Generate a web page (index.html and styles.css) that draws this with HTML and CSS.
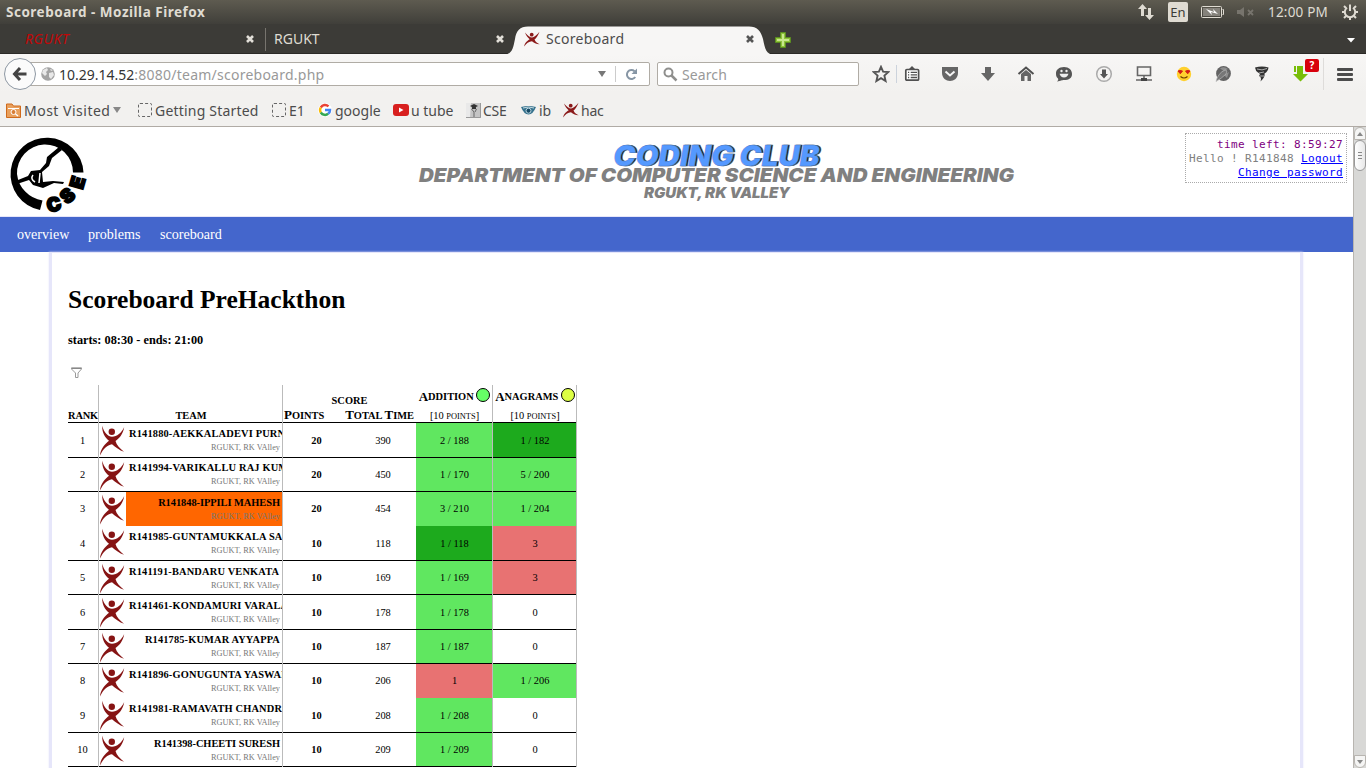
FILE: index.html
```html
<!DOCTYPE html>
<html lang="en">
<head>
<meta charset="utf-8">
<title>Scoreboard</title>
<link rel="stylesheet" href="styles.css">
</head>
<body>
<svg width="0" height="0" class="defs">
  <defs>
    <symbol id="man" viewBox="0 0 26 31">
      <circle cx="12.800" cy="6.700" r="3.200"/>
      <path d="M3.200 .8C5 8 9 11.500 13 11.800C18 11.500 22.500 8 25.200 2C24 9.500 20 13.500 16.500 16C17.500 20 21 23.500 25 26.800C20.500 25.500 16.500 22 13 19.300C8 20 4 24 1 30.500C1.500 24 6 19 10 15.800C6 12.500 3 8 3.200 .8Z"/>
    </symbol>
    <symbol id="fav" viewBox="0 0 16 16">
      <circle cx="7.700" cy="3.700" r="1.900"/>
      <path d="M1 1.500C4 5 6 6.300 8 6.500C10 6.300 13 4 15.500 .8C14 5 12 7.500 10.500 8.500C11.500 11 13.500 12.300 15.800 13.300C12 13.300 9.500 11.500 8 10.300C5 10.500 2 12.500 .2 15.500C.5 12 3.500 9.500 5.700 8.200C3.500 6.500 2 4.500 1 1.500Z"/>
    </symbol>
    <symbol id="close" viewBox="0 0 10 10"><path d="M2 2L8 8M8 2L2 8" stroke-width="2.600"/></symbol>
  </defs>
</svg>
<div class="screen">
  <header class="titlebar">
    <span class="window-title">Scoreboard - Mozilla Firefox</span>
    <div class="indicators">
      <svg width="18" height="18" viewBox="0 0 18 18" fill="#dfdbd2"><path d="M5.500 1L10 6H7V13H4V6H1ZM12.500 17L8 12H11V5H14V12H17Z"/></svg>
      <span class="lang">En</span>
      <svg class="battery" width="25" height="14" viewBox="0 0 25 14"><rect x="1.500" y="1.500" width="20" height="11" rx="1" fill="none" stroke="#dfdbd2"/><rect x="3" y="3" width="17" height="8" fill="#85827b"/><path d="M22.500 4.500h1v5h-1" fill="none" stroke="#dfdbd2"/><path d="M6 4L14 7L13 4L18 9L11 7L12 10Z" fill="#fff"/></svg>
      <svg class="volume" width="19" height="12" viewBox="0 0 19 12"><path d="M1 4H4L8 1V11L4 8H1Z" fill="#77746d"/><path d="M12 4L17 9M17 4L12 9" stroke="#77746d" stroke-width="1.800"/></svg>
      <span class="clock">12:00 PM</span>
      <svg class="gear" width="18" height="18" viewBox="0 0 18 18" fill="none" stroke="#dfdbd2"><path d="M6 4.800A5.200 5.200 0 1 0 12 4.800" stroke-width="2"/><path d="M9 1.500V8" stroke-width="2"/><path d="M3 3L5 5M15 3L13 5M1 9H3.500M14.500 9H17M3 15L5 13M15 15L13 13M9 14.500V17" stroke-width="2"/></svg>
    </div>
  </header>
  <nav class="tabs">
    <div class="tab tab-one"><span class="tab-red">RGUKT</span><svg class="x" width="10" height="10"><use href="#close"/></svg></div>
    <div class="tab tab-two"><span>RGUKT</span><svg class="x" width="10" height="10"><use href="#close"/></svg></div>
    <div class="tab tab-active">
      <svg class="tab-shape" width="270" height="29" viewBox="0 0 270 29"><path d="M0 29C8 28 9 23 11 13C12 5 16 .5 24 .5H245C253 .5 257 5 259 13C261 23 262 28 270 29Z" fill="#f7f6f5"/></svg>
      <svg class="fav" width="16" height="16"><use href="#fav"/></svg><span class="tab-name">Scoreboard</span><svg class="x" width="10" height="10"><use href="#close"/></svg>
    </div>
    <svg class="plus" width="16" height="16" viewBox="0 0 16 16"><path d="M5.500 .5h5v5h5v5h-5v5h-5v-5h-5v-5h5Z" fill="#8fc33a" stroke="#5b8d20"/><path d="M8 2V14M2 8H14" stroke="#c9e88d" stroke-width="2"/></svg>
    <svg class="tabs-more" width="8" height="5" viewBox="0 0 8 5"><path d="M0 0H8L4 4.500Z" fill="#fff"/></svg>
  </nav>
  <div class="toolbar">
    <div class="back"><svg width="16" height="16" viewBox="0 0 16 16"><path d="M8 2L2.500 8L8 14M3 8H14.500" fill="none" stroke="#444" stroke-width="3"/></svg></div>
    <div class="urlbar">
      <svg width="14" height="14" viewBox="0 0 14 14"><circle cx="7" cy="7" r="6.800" fill="#a3a3a3"/><path d="M2 3L6 1L7 3L5 5L6 7L4 9L1 6ZM8 6L12 5L13 8L10 12L8 10ZM9 2L12 3L10 4Z" fill="#e8e8e8"/></svg>
      <span class="url"><b>10.29.14.52</b>:8080/team/scoreboard.php</span>
      <svg class="drop" width="8" height="6" viewBox="0 0 8 6"><path d="M0 0H8L4 6Z" fill="#777"/></svg>
      <i class="url-sep"></i>
      <svg width="13" height="13" viewBox="0 0 13 13"><path d="M10.200 9A4.500 4.500 0 1 1 9.500 3.200" fill="none" stroke="#8796a5" stroke-width="2"/><path d="M12 .5V6H6.500Z" fill="#8796a5"/></svg>
    </div>
    <div class="search"><svg width="15" height="15" viewBox="0 0 15 15" fill="none" stroke="#8f8f8d"><circle cx="5.500" cy="5.500" r="4" stroke-width="2"/><path d="M8.500 8.500L13.500 13.500" stroke-width="2.500"/></svg><span>Search</span></div>
    <div class="tools">
      <svg viewBox="0 0 18 18"><path d="M9 1.800L11.100 6.600L16.300 7.100L12.400 10.600L13.600 16L9 13.200L4.400 16L5.600 10.600L1.700 7.100L6.900 6.600Z" fill="none" stroke="#555" stroke-width="1.900"/></svg>
      <i class="tool-sep"></i>
      <svg class="t-list" viewBox="0 0 18 18"><rect x="2.800" y="4.500" width="12.800" height="10.700" rx="1" fill="#fff" stroke="#505050" stroke-width="1.700"/><path d="M5.500 4.500L9 1L12.500 4.500Z" fill="#505050"/><path d="M5 7.300H6.200M5 9.900H6.200M5 12.500H6.200M7.700 7.300H14M7.700 9.900H14M7.700 12.500H14" stroke="#505050" stroke-width="1.300"/></svg>
      <svg class="m20" viewBox="0 0 18 18"><path d="M1 2H17V8C17 13 13 16 9 16S1 13 1 8Z" fill="#666"/><path d="M4.500 6.500L9 10.500L13.500 6.500" fill="none" stroke="#f5f5f5" stroke-width="2"/></svg>
      <svg class="m20" viewBox="0 0 18 18"><path d="M6 2H12V8H16L9 16L2 8H6Z" fill="#666"/></svg>
      <svg class="m20" viewBox="0 0 18 18"><path d="M1.500 9L9 2.500L16.500 9" fill="none" stroke="#505050" stroke-width="2"/><path d="M4 9L9 5L14 9V16H10.500V11H7.500V16H4Z" fill="#666"/></svg>
      <svg class="m20" viewBox="0 0 18 18"><path d="M9 2C14 2 17 5 17 9S14 15 9 15C7 15 6 16 2 16.500Q4 15 3 13.500C1 12 1 10 1 8C1 5 4 2 9 2Z" fill="#555"/><circle cx="6.500" cy="6" r="1.200" fill="#eee"/><circle cx="11.500" cy="6" r="1.200" fill="#eee"/><path d="M4.500 8.800H13.500Q12.500 12.500 9 12.500T4.500 8.800Z" fill="#eee"/></svg>
      <svg class="m22" viewBox="0 0 18 18"><circle cx="9" cy="9" r="7.300" fill="none" stroke="#aaa" stroke-width="1.500"/><path d="M7 4.500H11V9H13L9 13.500L5 9H7Z" fill="#555"/></svg>
      <svg class="m22" viewBox="0 0 18 18"><path d="M2.500 2H15.500V10.500H2.500ZM9 11V13M1 15H17" fill="none" stroke="#666" stroke-width="1.600"/><path d="M6 14.500H12" stroke="#444" stroke-width="3"/></svg>
      <svg class="m22" viewBox="0 0 18 18"><circle cx="9" cy="9" r="7.200" fill="#ffd02f"/><path d="M5 5.500L3 6L5.300 8.800L7.500 6ZM13 5.500L10.500 6L12.700 8.800L15 6Z" fill="#d31c17" stroke="#d31c17"/><path d="M5.500 11.500Q9 14.500 12.500 11.500" fill="none" stroke="#714000" stroke-width="1.200"/></svg>
      <svg class="m21" viewBox="0 0 18 18"><circle cx="9.500" cy="8.500" r="7.400" fill="#636363"/><path d="M6 3.500Q10 1 14 4L10 6ZM10 10L15 7L13 13Z" fill="#8e8e8e"/><path d="M2 16.500Q4 8 11 5Q14 5 12 9Q8 13 2 16.500Z" fill="#777" stroke="#bbb" stroke-width=".7"/></svg>
      <svg class="m21" viewBox="0 0 18 18"><path d="M2 2.500Q9 .5 15.500 2.500Q15 6.500 11.500 8.500Q12.500 12 7.500 16.500Q9 12 6 11Q8 9 5 7.500Q2.500 6 2 2.500Z" fill="#333"/><path d="M4 4Q9 6 14 3.500M6 8L11 7M7 11H11" stroke="#ccc" fill="none" stroke-width=".8"/></svg>
      <div class="dl"><svg viewBox="0 0 18 18"><path d="M3 1H5V7H3ZM6 1H12V9H17L9.500 16.500L2 9H6Z" fill="#78bd07"/></svg><span class="badge">?</span></div>
    </div>
    <i class="menu-sep"></i>
    <div class="burger"><i></i><i></i><i></i></div>
  </div>
  <div class="bookmarks">
    <svg width="15" height="15" viewBox="0 0 15 15"><path d="M.5 14.500V1H6L7.500 3H14.500V14.500Z" fill="#e9a05c" stroke="#cf6a1c"/><path d="M2 5.500H13" stroke="#fff"/><circle cx="7.500" cy="9" r="2.500" fill="#d87e36" stroke="#fff"/><path d="M9.500 11L12 13" stroke="#fff" stroke-width="1.500"/></svg><span class="bm b1">Most Visited</span>
    <svg class="bdrop" width="8" height="6" viewBox="0 0 8 6"><path d="M0 0H8L4 6Z" fill="#888"/></svg>
    <i class="blank g1"></i><span class="bm b2">Getting Started</span>
    <i class="blank g2"></i><span class="bm b3">E1</span>
    <svg class="g3" width="14" height="14" viewBox="0 0 14 14" fill="none" stroke-width="2.500"><circle cx="7" cy="7" r="7" fill="#fff"/><path d="M2.800 4.500A5 5 0 0 1 10.500 3.400" stroke="#ea4335"/><path d="M2.800 9.500A5 5 0 0 1 2.800 4.500" stroke="#fbbc05"/><path d="M10.200 10.800A5 5 0 0 1 2.800 9.500" stroke="#34a853"/><path d="M7 7H12Q12 9.500 10.200 10.800" stroke="#4285f4"/></svg><span class="bm b4">google</span>
    <svg class="g4" width="16" height="12" viewBox="0 0 16 12"><rect width="16" height="12" rx="3" fill="#d8201f"/><path d="M6 3.500V8.500L10.500 6Z" fill="#fff"/></svg><span class="bm b5">u tube</span>
    <svg class="g5" width="15" height="15" viewBox="0 0 15 15"><path d="M0 0H15V15H0Z" fill="#c4c4c4"/><path d="M0 0H5L4 15H0Z" fill="#e9e9e9"/><path d="M4 3L8 1L12 3L8 5ZM6 4H10V6H6Z" fill="#333"/><path d="M5.500 6L8 9V14M10.500 6L9 9" fill="none" stroke="#666"/><path d="M14.500 0V14.500H0" fill="none" stroke="#999"/></svg><span class="bm b6">CSE</span>
    <svg class="g6" width="15" height="9" viewBox="0 0 15 9"><path d="M0 1Q7.500-1 15 1Q12 8.500 7.500 8.500T0 1Z" fill="#36728d"/><path d="M2 2Q7.500 0 13 2" stroke="#c4dae2" fill="none"/><circle cx="7.500" cy="4.700" r="2.500" fill="#164a65" stroke="#b9d4df"/></svg><span class="bm b7">ib</span>
    <svg class="fav g7" width="16" height="16"><use href="#fav"/></svg><span class="bm b8">hac</span>
  </div>
  <div class="viewport">
    <main class="page">
      <div class="banner">
        <svg class="cse" width="80" height="80" viewBox="0 0 80 80">
          <path d="M75.500 37.500A36.500 36.500 0 1 0 32 75L34.500 65.500A30 30 0 0 1 9 39A28.500 28.500 0 0 1 36 9.500A28 28 0 0 1 65 37.500Z"/>
          <path d="M51 12L39 22L38 28L32 35L23 36L20 41L10 45L9 49L21 45L25 50L35 53L46 48L55 49L56 47L45 46L35 47L34 37L41 31L44 23L54 15Z"/>
          <path d="M25 40Q22 44 27 47M32 38L31 48" stroke="#fff" stroke-width="1.500" fill="none"/>
          <g class="cse-letters"><text transform="translate(41 78) rotate(-17)">C</text><text transform="translate(59.500 70) rotate(-43)">S</text><text transform="translate(74.500 55) rotate(-74)">E</text></g>
        </svg>
        <svg class="heading" width="604" height="70" viewBox="0 0 604 70">
          <text class="club-shadow" x="200" y="32" textLength="206" lengthAdjust="spacingAndGlyphs">CODING CLUB</text>
          <text class="club" x="198.500" y="31.500" textLength="206" lengthAdjust="spacingAndGlyphs">CODING CLUB</text>
          <text class="dept" x="4" y="48" textLength="595" lengthAdjust="spacingAndGlyphs">DEPARTMENT OF COMPUTER SCIENCE AND ENGINEERING</text>
          <text class="campus" x="229" y="64" textLength="146" lengthAdjust="spacingAndGlyphs">RGUKT, RK VALLEY</text>
        </svg>
        <div class="login"><span class="left">time left: 8:59:27</span><span>Hello ! R141848 <a>Logout</a></span><a>Change password</a></div>
      </div>
      <nav class="menu"><span class="m1">overview</span><span class="m2">problems</span><span class="m3">scoreboard</span></nav>
      <section class="box">
        <h1>Scoreboard PreHackthon</h1>
        <h2>starts: 08:30 - ends: 21:00</h2>
        <svg class="filter" width="11" height="12" viewBox="0 0 11 12"><path d="M.5 .8H10.500V2L7 6V10.500H4.500V6L.5 2Z" fill="#fff" stroke="#999"/><path d="M1 1.500H10" stroke="#888"/></svg>
        <div class="board">
          <div class="row head">
            <div class="c rank">RANK</div><div class="c team-head">TEAM</div>
            <div class="c score"><span>SCORE</span><div class="score-cols"><span><b>P</b>OINTS</span><span><b>T</b>OTAL <b>T</b>IME</span></div></div>
            <div class="c prob"><span><b>A</b>DDITION <i class="dot green-dot"></i></span><small>[10 <em>POINTS</em>]</small></div>
            <div class="c prob"><span><b>A</b>NAGRAMS <i class="dot yellow-dot"></i></span><small>[10 <em>POINTS</em>]</small></div>
          </div>
          <div class="row tall"><div class="c rank">1</div><div class="c team"><svg><use href="#man"/></svg><div class="who long"><b>R141880-AEKKALADEVI PURN</b><small>RGUKT, RK VAlley</small></div></div><div class="c pts">20</div><div class="c time">390</div><div class="c ok">2 / 188</div><div class="c first">1 / 182</div></div>
          <div class="row up"><div class="c rank">2</div><div class="c team"><svg><use href="#man"/></svg><div class="who long"><b>R141994-VARIKALLU RAJ KUM</b><small>RGUKT, RK VAlley</small></div></div><div class="c pts">20</div><div class="c time">450</div><div class="c ok">1 / 170</div><div class="c ok">5 / 200</div></div>
          <div class="row open"><div class="c rank">3</div><div class="c team"><svg><use href="#man"/></svg><div class="who me"><b>R141848-IPPILI MAHESH</b><small>RGUKT, RK VAlley</small></div></div><div class="c pts">20</div><div class="c time">454</div><div class="c ok">3 / 210</div><div class="c ok">1 / 204</div></div>
          <div class="row tall"><div class="c rank">4</div><div class="c team"><svg><use href="#man"/></svg><div class="who long"><b>R141985-GUNTAMUKKALA SA</b><small>RGUKT, RK VAlley</small></div></div><div class="c pts">10</div><div class="c time">118</div><div class="c first">1 / 118</div><div class="c bad">3</div></div>
          <div class="row"><div class="c rank">5</div><div class="c team"><svg><use href="#man"/></svg><div class="who long"><b>R141191-BANDARU VENKATA</b><small>RGUKT, RK VAlley</small></div></div><div class="c pts">10</div><div class="c time">169</div><div class="c ok">1 / 169</div><div class="c bad">3</div></div>
          <div class="row tall"><div class="c rank">6</div><div class="c team"><svg><use href="#man"/></svg><div class="who long"><b>R141461-KONDAMURI VARALA</b><small>RGUKT, RK VAlley</small></div></div><div class="c pts">10</div><div class="c time">178</div><div class="c ok">1 / 178</div><div class="c">0</div></div>
          <div class="row up"><div class="c rank">7</div><div class="c team"><svg><use href="#man"/></svg><div class="who"><b class="wide">R141785-KUMAR AYYAPPA</b><small>RGUKT, RK VAlley</small></div></div><div class="c pts">10</div><div class="c time">187</div><div class="c ok">1 / 187</div><div class="c">0</div></div>
          <div class="row open"><div class="c rank">8</div><div class="c team"><svg><use href="#man"/></svg><div class="who long"><b>R141896-GONUGUNTA YASWAN</b><small>RGUKT, RK VAlley</small></div></div><div class="c pts">10</div><div class="c time">206</div><div class="c bad">1</div><div class="c ok">1 / 206</div></div>
          <div class="row tall"><div class="c rank">9</div><div class="c team"><svg><use href="#man"/></svg><div class="who long"><b>R141981-RAMAVATH CHANDR</b><small>RGUKT, RK VAlley</small></div></div><div class="c pts">10</div><div class="c time">208</div><div class="c ok">1 / 208</div><div class="c">0</div></div>
          <div class="row"><div class="c rank">10</div><div class="c team"><svg><use href="#man"/></svg><div class="who"><b>R141398-CHEETI SURESH</b><small>RGUKT, RK VAlley</small></div></div><div class="c pts">10</div><div class="c time">209</div><div class="c ok">1 / 209</div><div class="c">0</div></div>
        </div>
      </section>
    </main>
    <aside class="scrollbar"><i class="cap"><svg width="6" height="4" viewBox="0 0 6 4"><path d="M0 4L3 0L6 4Z" fill="#888"/></svg></i><i class="thumb"><u></u><u></u><u></u></i><i class="cap cap-end"><svg width="6" height="4" viewBox="0 0 6 4"><path d="M0 0L3 4L6 0Z" fill="#888"/></svg></i></aside>
  </div>
</div>
</body>
</html>
```
FILE: styles.css
```css
* { box-sizing: border-box; }
body { margin: 0; background: #fff; }
svg { flex: none; display: block; }
.defs { position: absolute; }
.screen { width: 1366px; height: 768px; overflow: hidden; display: flex; flex-direction: column; font-family: "Noto Sans", "Open Sans", sans-serif; font-size: 14px; color: #4c4c4c; white-space: nowrap; }

.titlebar { height: 24px; flex: none; display: flex; justify-content: space-between; align-items: center; padding: 0 7px 0 6px; background: linear-gradient(#5e5b50, #403f3a); color: #dfdbd2; }
.window-title { font-weight: 700; font-size: 13.5px; letter-spacing: .5px; }
.indicators { display: flex; align-items: center; }
.lang { width: 20px; height: 20px; margin-left: 13px; border-radius: 2px; background: #dfdbd2; color: #3c3b37; font-size: 13px; line-height: 20px; text-align: center; }
.battery { margin-left: 12px; }
.volume { margin-left: 11px; }
.clock { margin-left: 13px; width: 61px; font-size: 13.5px; letter-spacing: .2px; }
.gear { margin-left: 12px; }

.tabs { height: 30px; flex: none; display: flex; background: #3c3b37; color: #dfdbd2; border-bottom: 1px solid #2b2a27; }
.tab { display: flex; align-items: center; height: 29px; }
.tab span { flex: 1; }
.x { stroke: #e2dfd8; }
.tab-one { width: 265px; padding-left: 25px; padding-right: 10px; }
.tab-red { color: #c00808; font-style: italic; letter-spacing: .5px; }
.tab-two { width: 239px; padding-left: 8px; border-left: 1px solid #77746e; border-image: linear-gradient(transparent 15%, #77746e 15%, #77746e 90%, transparent 90%) 1; }
.tab-two .x { margin-right: -1px; }
.tab-active { position: relative; width: 270px; padding-left: 20px; padding-right: 19px; color: #4c4c4c; }
.tab-active .x { stroke: #555; }
.tab-shape { position: absolute; left: 0; top: 2px; }
.tab-active > .fav, .tab-active > .x, .tab-name { position: relative; }
.tab-active .tab-name { margin-left: 6px; letter-spacing: .3px; }
.fav { fill: #8b1a1a; }
.plus { margin: 8px 0 0 1px; }
.tabs-more { margin: 14px 11px 0 auto; }

.toolbar { height: 38px; flex: none; display: flex; align-items: center; padding-left: 4px; background: linear-gradient(#f7f6f5, #f2f1ef); padding-top: 2px; }
.back { position: relative; z-index: 1; width: 32px; height: 32px; border: 1px solid #8e98a3; border-radius: 50%; background: #fbfbfb; display: flex; align-items: center; justify-content: center; }
.urlbar { width: 624px; height: 24px; margin-left: -10px; border: 1px solid #b0aca5; border-radius: 2px; background: #fff; display: flex; align-items: center; padding: 0 11px 0 14px; color: #999; }
.url { flex: 1; margin-left: 4px; letter-spacing: .24px; }
.url b { font-weight: 400; color: #333; letter-spacing: 0; }
.drop { margin-right: -5px; }
.url-sep { width: 1px; height: 16px; background: #ccc; margin: 0 9px 0 11px; }
.search { width: 202px; height: 24px; margin-left: 7px; border: 1px solid #b0aca5; border-radius: 2px; background: #fff; color: #999; display: flex; align-items: center; padding-left: 5px; gap: 4px; letter-spacing: .1px; }
.drop + .url-sep { margin-left: 14px; }
.tools { display: flex; align-items: center; margin-left: 13px; }
.tools svg { width: 18px; height: 18px; }
.tool-sep { width: 1px; height: 18px; margin-left: 6px; background: #ccd3dc; }
.t-list { margin-left: 6px; }
.m20 { margin-left: 20px; } .m21 { margin-left: 21px; } .m22 { margin-left: 22px; }
.dl { position: relative; margin-left: 20px; }
.badge { position: absolute; left: 14px; top: -6px; width: 14px; height: 13px; border-radius: 2px; background: #d8000c; color: #fff; font-weight: 700; font-size: 10px; line-height: 13px; text-align: center; }
.menu-sep { width: 1px; height: 32px; margin-left: 14px; background: #dedcda; }
.burger { margin-left: 13px; display: grid; gap: 2px; }
.burger i { width: 16px; height: 3px; border-radius: 1px; background: #4c4c4c; }

.bookmarks { height: 35px; flex: none; display: flex; align-items: center; background: #f2f1ef; border-bottom: 1px solid #b0aba5; padding: 2px 0 0 6px; }
.bm { margin-left: 3px; flex: none; }
.b1 { width: 87px; letter-spacing: .5px; } .b2 { width: 104px; letter-spacing: .2px; } .b3 { width: 16px; } .b4 { width: 46px; } .b5 { width: 42px; margin-left: 2px; } .b6 { width: 26px; margin-left: 2px; letter-spacing: -.3px; } .b7 { width: 13px; } .b8 { margin-left: 2px; letter-spacing: -.2px; }
.bdrop { margin-left: 2px; }
.blank { width: 14px; height: 14px; border: 1px dashed #666; border-radius: 2px; }
.g1 { margin-left: 17px; } .g2 { margin-left: 13px; } .g3 { margin-left: 13px; } .g4 { margin-left: 12px; } .g5 { margin-left: 13px; } .g6 { margin-left: 12px; } .g7 { margin-left: 11px; }

.viewport { flex: 1; min-height: 0; display: flex; background: #fff; }
.page { width: 1353px; overflow: hidden; font-family: "Liberation Serif", serif; color: #000; }
.banner { height: 90px; display: flex; align-items: flex-start; border-bottom: 1px solid #e6e6fa; }
.cse { margin: 8px 0 0 8px; overflow: visible; }
.cse-letters { font: 900 19px Inter, sans-serif; stroke: #000; stroke-width: 1.800px; }
.heading { margin: 7px 0 0 327px; font-family: Inter, sans-serif; font-weight: 900; font-style: italic; }
.club { font-size: 28px; fill: #59f; stroke: #4c7fcc; stroke-width: .5px; }
.club-shadow { font-size: 28px; fill: #111; stroke: #555; stroke-width: .5px; }
.dept { font-size: 19px; fill: #808080; }
.campus { font-size: 15px; fill: #808080; }
.login { margin: 6px 6px 0 auto; width: 162px; height: 50px; border: 1px dotted #aaa; padding: 4px 3px 0 0; display: flex; flex-direction: column; align-items: flex-end; font: 11px/14px "DejaVu Sans Mono", monospace; letter-spacing: .38px; color: #808080; }
.login a { color: #00f; text-decoration: underline; }
.login .left { color: #800080; }
.menu { height: 35px; background: #46c; color: #fff; font-size: 14.100px; line-height: 34px; display: flex; padding-left: 17px; }
.m1 { width: 71px; } .m2 { width: 72px; }
.box { width: 1254px; height: 600px; margin-left: 49px; border: solid #e6e6fa; border-width: 1px 3px; padding: 0 16px; box-shadow: 0 0 2px #e6e6fa; }
h1 { margin: 32px 0 0; font-size: 25.500px; line-height: 30px; }
h2 { margin: 17px 0 0; font-size: 12.300px; line-height: 16px; }
.filter { margin: 19px 0 0 3px; }
.board { margin-top: 6px; width: 509px; font-size: 10.400px; }
.row { display: grid; grid-template-columns: 31px 184px 67px 66px 77px 84px; height: 34px; }
.tall { height: 35px; }
.c { display: flex; align-items: center; justify-content: center; border-bottom: 1px solid #000; min-width: 0; overflow: hidden; line-height: 12px; background-clip: padding-box; }
.tall .c { padding-top: 1px; }
.open .c { border-bottom: 0; padding-bottom: 1px; }
.rank, .team, .team-head, .score, .prob, .row .c:nth-child(5), .row .c:nth-child(6) { box-shadow: inset -1px 0 #bbb; border-image: linear-gradient(to right, #000 calc(100% - 1px), #bbb calc(100% - 1px)) 0 0 1 0; }
.pts { font-weight: 700; }
.row .rank { padding-right: 2px; }
.ok { background: #60e760; } .first { background: #1daa1d; } .bad { background: #e87272; }
.head { height: 38px; font-weight: 700; }
.head .c { align-items: flex-end; padding-bottom: 0; }
.head .c.rank { padding-right: 1px; letter-spacing: -.2px; }
.head b { font-size: 13px; line-height: 12px; }
.head .c.score { grid-column: 3 / 5; flex-direction: column; align-items: stretch; justify-content: flex-end; text-align: center; box-shadow: none; border-image: none; }
.score-cols { display: flex; justify-content: space-between; padding: 2px 2px 0 1px; line-height: 13px; }
.head .c.prob { flex-direction: column; align-items: center; justify-content: space-between; padding-top: 4px; }
.head .prob span { display: flex; align-items: center; line-height: 16px; white-space: pre; }
.head small { font-weight: 400; font-size: 10.400px; line-height: 10px; }
.head em { font-style: normal; font-size: 8.400px; }
.dot { width: 14px; height: 14px; border: 1px solid #000; border-radius: 50%; margin-top: -5px; }
.green-dot { background: #6f6; } .yellow-dot { background: #df4; }
.row .team { justify-content: flex-start; align-items: stretch; padding: 0 1px 0 0; }
.team svg { width: 26px; height: 31px; margin: 2px 1px 0 0; fill: #861414; }
.who { width: 156px; padding: 4px 2px 0 3px; display: flex; flex-direction: column; align-items: flex-end; line-height: 14px; overflow: hidden; }
.up .who { padding-top: 3px; }
.who b { height: 15px; letter-spacing: -.04px; }
.who .wide { letter-spacing: .14px; }
.long b { align-self: flex-start; letter-spacing: .17px; }
.who small { font-size: 8.300px; line-height: 12px; color: #777; }
.me { background: #f60; }

.scrollbar { width: 13px; background: #d8d8d6; border-left: 1px solid #b8b5b0; display: flex; flex-direction: column; align-items: center; }
.cap { width: 12px; height: 13px; border: 1px solid #b8b5b0; border-radius: 6px 6px 0 0; background: #f5f5f4; display: flex; align-items: center; justify-content: center; }
.thumb { width: 12px; height: 31px; border: 1px solid #999; border-radius: 6px; background: linear-gradient(90deg, #fff, #e8e8e8); display: flex; flex-direction: column; gap: 2px; align-items: center; justify-content: center; }
.thumb u { width: 4px; height: 1px; background: #888; }
.cap-end { margin-top: auto; border-radius: 0 0 6px 6px; }
```
